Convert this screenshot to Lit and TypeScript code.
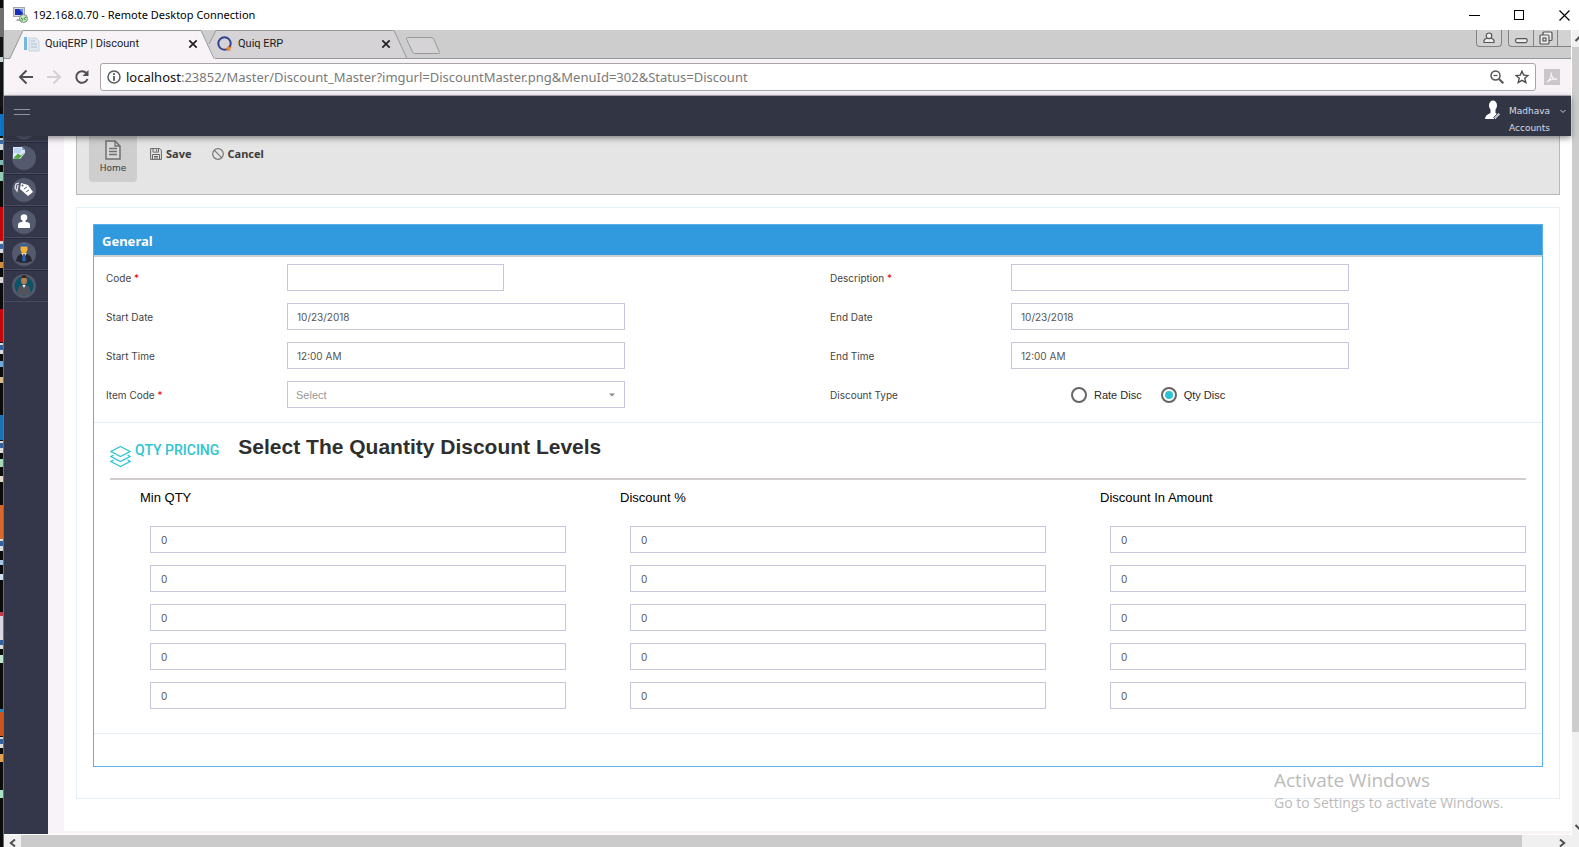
import { LitElement, html, css, svg, nothing } from "lit";
import { customElement, state } from "lit/decorators.js";

type Field = { id: string; label: string; value: string; required?: boolean; short?: boolean };

const LEFT_FIELDS: Field[] = [
  { id: "code", label: "Code", value: "", required: true, short: true },
  { id: "start-date", label: "Start Date", value: "10/23/2018" },
  { id: "start-time", label: "Start Time", value: "12:00 AM" },
];

const RIGHT_FIELDS: Field[] = [
  { id: "description", label: "Description", value: "", required: true },
  { id: "end-date", label: "End Date", value: "10/23/2018" },
  { id: "end-time", label: "End Time", value: "12:00 AM" },
];

const LEVEL_COLUMNS = ["Min QTY", "Discount %", "Discount In Amount"];
const LEVEL_ROWS = [1, 2, 3, 4, 5];

/* ---------- desktop sliver behind the remote window ---------- */
@customElement("desktop-edge")
export class DesktopEdge extends LitElement {
  static styles = css`
    :host {
      display: block;
      border-right: 1px solid #2b83c4;
      background: #0b0b0b;
      overflow: hidden;
    }
    svg { display: block; }
  `;
  private blocks: [number, number, string][] = [
    [8, 29, "#6f6f70"], [37, 70, "#131313"], [57, 5, "#c9d3d8"],
    [114, 22, "#0a7fd8"], [138, 12, "#d5dade"], [140, 4, "#3a6ea5"],
    [160, 5, "#7fb8b0"], [172, 9, "#8fd0b4"],
    [207, 34, "#c40709"], [241, 12, "#dcdcdc"], [244, 5, "#3a65a0"],
    [262, 6, "#cf8d3e"], [277, 6, "#d6d6d6"],
    [309, 33, "#c40709"], [343, 11, "#dcdcdc"], [345, 5, "#33609c"],
    [361, 6, "#6ea8d6"], [377, 6, "#d9b98e"],
    [415, 25, "#1a72b4"], [441, 12, "#dcdcdc"], [443, 5, "#33609c"],
    [459, 8, "#a6d8b8"], [476, 6, "#e2d8c8"],
    [505, 34, "#d8692a"], [539, 12, "#dcdcdc"], [541, 5, "#33609c"],
    [560, 5, "#a4c4e8"], [574, 6, "#cfe0ee"],
    [612, 4, "#c23a4c"], [616, 22, "#dcd6e4"], [638, 11, "#dcdcdc"], [640, 5, "#33609c"],
    [655, 8, "#bfe6cc"],
    [709, 3, "#2a88b8"], [712, 24, "#c9551f"], [737, 11, "#dcdcdc"], [739, 5, "#33609c"],
    [754, 8, "#e0a050"], [790, 8, "#a6e6c4"],
  ];
  render() {
    return html`<svg width="3" height="847" aria-hidden="true">
      ${this.blocks.map(([y, h, c]) => svg`<rect x="0" y=${y} width="3" height=${h} fill=${c}></rect>`)}
    </svg>`;
  }
}

/* ---------- browser chrome: tabs and address bar ---------- */
@customElement("browser-chrome")
export class BrowserChrome extends LitElement {
  static styles = css`
    :host { display: block; font-family: "Noto Sans", sans-serif; color: #1b1b1b; }
    button { border: 0; padding: 0; margin: 0; background: none; font: inherit; color: inherit; display: flex; align-items: center; justify-content: center; }
    svg { display: block; flex: none; }
    .strip { display: flex; height: 28px; background: #cdcdcd; border-bottom: 1px solid #98979a; padding-left: 5px; }
    .tab { position: relative; width: 206px; height: 29px; margin-right: -13px; margin-bottom: -1px; flex: none; }
    .tab.active { z-index: 1; }
    .shape { position: absolute; inset: 0; }
    .tabrow { position: relative; box-sizing: border-box; display: flex; align-items: center; height: 28px; padding: 0 17px 0 15px; gap: 5px; font: 11px/16px Roboto, sans-serif; }
    .tabrow span { flex: 1; white-space: nowrap; }
    .newtab { width: 36px; height: 31px; margin-left: 10px; }
    .controls { margin-left: auto; display: flex; gap: 6px; height: 17px; }
    .group { display: flex; border: 1px solid #828282; border-top: 0; border-radius: 0 0 4px 4px; background: #d2d2d2; }
    .group button { width: 24px; }
    .group button + button { border-left: 1px solid #828282; }
    .group.last { border-right: 0; border-bottom-right-radius: 0; }
    .group.last .cut { width: 14px; }
    .bar { display: flex; align-items: center; height: 36px; background: #f8f3f7; border-bottom: 1px solid #b5b2b8; padding: 0 11px 0 14px; }
    .nav { display: flex; gap: 12px; margin-right: 10px; }
    .nav button { width: 16px; height: 16px; }
    .url { flex: 1; display: flex; align-items: center; height: 26px; border: 1px solid #a7a5a9; border-radius: 3px; background: #fff; padding: 0 6px; gap: 5px; min-width: 0; }
    .address { flex: 1; color: #7a7a7a; font: 13px/20px "Noto Sans", sans-serif; white-space: nowrap; overflow: hidden; }
    .address b { color: #111; font-weight: 400; }
    .tools { display: flex; gap: 11px; }
    .pdf { margin-left: 8px; }
  `;

  private close() {
    return html`<button aria-label="Close tab"><svg width="10" height="10" viewBox="0 0 10 10"><path d="M1.3 1.3l7.4 7.4M8.7 1.3L1.3 8.7" stroke="#1f1f1f" stroke-width="1.7"/></svg></button>`;
  }

  render() {
    return html`
      <div class="strip">
        <div class="tab active">
          <svg class="shape" width="206" height="29"><path d="M0 29L1 28.5L14 .5H192L206 28.5V29Z" fill="#f8f3f7"/><path d="M0 28.5L1 28L14 .5H192L205 28.5" fill="none" stroke="#98979a"/></svg>
          <div class="tabrow">
            <svg width="16" height="16" viewBox="0 0 16 16"><rect x="0" y="1" width="3" height="13" fill="#76b7de"/><path d="M5 2h7l3 3v10H5z" fill="#dfe9f1" stroke="#c7d3dd"/><path d="M7 5h4M7 8h6M7 11h6" stroke="#b0c0cd"/></svg>
            <span>QuiqERP | Discount</span>${this.close()}
          </div>
        </div>
        <div class="tab">
          <svg class="shape" width="206" height="29"><path d="M7 14L14 .5H192L205 28H14Z" fill="#d5d3d6"/><path d="M7 14L14 .5H192L205 28.5" fill="none" stroke="#98979a"/></svg>
          <div class="tabrow">
            <svg width="16" height="16" viewBox="0 0 16 16"><circle cx="7.5" cy="7.5" r="6.2" fill="none" stroke="#2f4494" stroke-width="2"/><path d="M11 9.500l1.200 1.600 2.800.2-2 1.700.8 2-2-.8-1.500 1.500-.3-2.200-2-1 2.200-.7z" fill="#ee8327"/></svg>
            <span>Quiq ERP</span>${this.close()}
          </div>
        </div>
        <button class="newtab" aria-label="New tab"><svg width="36" height="18" viewBox="0 0 36 18"><path d="M2.5 .5H26Q28 .5 29 2.5L34.5 15.5Q34.5 16.5 33.5 16.5H10Q8.5 16.5 7.5 15L1.5 2Q1.3 .7 2.5 .5Z" fill="#d5d3d6" stroke="#9a989b"/></svg></button>
        <div class="controls">
          <div class="group"><button aria-label="Profile"><svg width="12" height="12" viewBox="0 0 12 12" fill="#eee" stroke="#555" stroke-width="1.2"><path d="M1 10.5V8.5Q1.5 6.500 4 6.500H8Q10.5 6.500 11 8.5V10.5Z"/><circle cx="6" cy="3.8" r="2.8"/></svg></button></div>
          <div class="group last">
            <button aria-label="Minimize"><svg width="13" height="12"><rect x=".6" y="6.600" width="11.5" height="4" rx="1.5" fill="#eee" stroke="#555" stroke-width="1.2"/></svg></button>
            <button aria-label="Restore"><svg width="14" height="14" viewBox="0 0 14 14" fill="#eee" stroke="#555" stroke-width="1.2"><rect x="4" y="1" width="9" height="8.5" rx="1"/><rect x="1" y="4" width="9" height="9" rx="1"/><rect x="4" y="7" width="3" height="3"/></svg></button>
            <button class="cut" aria-label="Close"></button>
          </div>
        </div>
      </div>
      <div class="bar">
        <div class="nav">
          <button aria-label="Back"><svg width="16" height="16" viewBox="0 0 16 16" fill="none" stroke="#4e5054" stroke-width="2"><path d="M15 8H2.5M8.5 1.5L2 8l6.5 6.5"/></svg></button>
          <button aria-label="Forward"><svg width="16" height="16" viewBox="0 0 16 16" fill="none" stroke="#d5d1d6" stroke-width="2"><path d="M1 8h12.5M7.5 1.5L14 8l-6.5 6.5"/></svg></button>
          <button aria-label="Reload"><svg width="16" height="16" viewBox="0 0 16 16" fill="none" stroke="#4e5054" stroke-width="2"><path d="M13.5 10A5.8 5.8 0 1 1 12.3 4"/><path d="M14.5 1v6H8.5z" fill="#4e5054" stroke="none"/></svg></button>
        </div>
        <div class="url">
          <svg width="14" height="14" viewBox="0 0 14 14"><circle cx="7" cy="7" r="6" fill="none" stroke="#5c5c5c" stroke-width="1.5"/><path d="M7 3.2v1.7M7 6v4.7" stroke="#4a4a4a" stroke-width="1.7"/></svg>
          <span class="address"><b>localhost</b>:23852/Master/Discount_Master?imgurl=DiscountMaster.png&amp;MenuId=302&amp;Status=Discount</span>
          <div class="tools">
            <button aria-label="Zoom"><svg width="14" height="14" viewBox="0 0 14 14" fill="none" stroke="#555"><circle cx="5.5" cy="5.5" r="4.5" stroke-width="1.5"/><path d="M3.5 5.5h4" stroke-width="1.2"/><path d="M9 9l4.3 4.3" stroke-width="2"/></svg></button>
            <button aria-label="Bookmark"><svg width="14" height="14" viewBox="0 0 14 14"><path d="M7 1.2l1.7 3.9 4.3.4-3.2 2.8 1 4.2L7 10.300l-3.8 2.2 1-4.2L1 5.5l4.3-.4z" fill="none" stroke="#4d4d4d" stroke-width="1.4"/></svg></button>
          </div>
        </div>
        <button class="pdf" aria-label="PDF"><svg width="16" height="16" viewBox="0 0 16 16"><rect width="16" height="16" fill="#c9c7ca"/><path d="M3 13C6 11 8 7 7 3.5c0 4 2.5 7 6 7C9 9.5 5 11 3 13" fill="none" stroke="#f6f3f6" stroke-width="1.3"/></svg></button>
      </div>`;
  }
}

/* ---------- application menu rail ---------- */
@customElement("side-rail")
export class SideRail extends LitElement {
  static styles = css`
    :host { display: block; background: #333749; width: 44px; flex: none; }
    .stub { height: 5px; border-bottom: 1px solid #444857; background: radial-gradient(circle at 20px -8px, #4b5063 11px, #333749 12px); }
    ul { list-style: none; margin: 0; padding: 0; }
    li { border-bottom: 1px solid #464a5c; border-top: 1px solid #272b3b; height: 30px; display: flex; align-items: center; padding-left: 8px; }
    a { display: block; width: 24px; height: 24px; border-radius: 50%; background: #545a6d; }
    svg { display: block; }
  `;
  private icons = [
    { name: "Dashboard", art: svg`<path d="M1 1h9l3 3v9H1z" fill="#dfeafa"/><path d="M2 2h7v5H2z" fill="#b9d4f2"/><path d="M10 1v3h3z" fill="#7f9fc6"/><path d="M1 12.5l5-5 3 2 4-4-6 7.500z" fill="#4fa63c"/><path d="M8 13l5-6v6z" fill="#545a6d"/>` },
    { name: "Pricing", art: svg`<path d="M9 5l7 2 5 7-5 4-8-7z" fill="#fff"/><path d="M7 5l-3 1-1 4 2 3 1-6" fill="none" stroke="#e4e6ea" stroke-width="1.3"/><circle cx="10.5" cy="7.5" r="1" fill="#545a6d"/><path d="M12 11l3-2M14 14l3-2" stroke="#545a6d"/>` },
    { name: "Customers", art: svg`<circle cx="12" cy="7.5" r="3.3" fill="#fff"/><path d="M10.5 9h3v3h-3z" fill="#fff"/><path d="M6 18v-3q0-3 4-3h4q4 0 4 3v3z" fill="#fff"/>` },
    { name: "Managers", art: svg`<path d="M4 19q1-6 5-7h6q4 1 5 7-8 4-16 0z" fill="#26282f"/><ellipse cx="12" cy="6.500" rx="3.5" ry="5" fill="#f3b43a"/><path d="M8.500 3.500q3.500-4 7 0v1h-7z" fill="#2d5ea8"/><path d="M9 11h6l-3 5z" fill="#f4d48c"/><path d="M11 12h2l1 6-2 2-2-2z" fill="#2862b9"/>` },
    { name: "Employees", art: svg`<circle cx="12" cy="12" r="9.5" fill="#0d5366"/><path d="M5 21l1.5-8 4-2h3l4 2 1.5 8z" fill="#54545e"/><path d="M10.5 11h3L12 14z" fill="#fff"/><ellipse cx="12" cy="6" rx="3" ry="4.500" fill="#b67c52"/><path d="M9 5q0-4 3-4t3 4l-1-1h-4z" fill="#3b2620"/>` },
  ];
  render() {
    return html`<nav aria-label="Modules"><div class="stub"></div><ul>
      ${this.icons.map((i) => html`<li><a href="#" aria-label=${i.name}><svg width="24" height="24" viewBox="0 0 24 24">${i.art}</svg></a></li>`)}
    </ul></nav>`;
  }
}

/* ---------- discount form ---------- */
@customElement("discount-form")
export class DiscountForm extends LitElement {
  @state() private kind = "qty";

  static styles = css`
    * { box-sizing: border-box; }
    :host { display: block; font: 10px/16px Inter, Arial, sans-serif; color: #444; }
    svg { display: block; flex: none; }
    .panel { border: 1px solid #5baee8; }
    h2 { margin: 0; height: 32px; padding: 2px 0 0 8px; background: #3199de; border-bottom: 2px solid #d0cdd0; color: #fff; font: 700 13px/28px "Noto Sans", sans-serif; }
    .pair { display: grid; grid-template-columns: 1fr 1fr; border-bottom: 1px solid #e6eef6; padding: 7px 0 14px; }
    .column { display: grid; gap: 12px; align-content: start; }
    .row { display: grid; grid-template-columns: 25% 50%; height: 27px; align-items: center; }
    .row.short { grid-template-columns: 25% 33.333%; }
    .row > * { margin: 0 12px; }
    .row > label, .row > .caption { white-space: nowrap; }
    .star { color: #f00000; }
    input[type="text"], select { height: 27px; min-width: 0; border: 1px solid #c5c8dc; border-radius: 0; background: #fff; padding: 0 9px; font: 10px/16px Inter, Arial, sans-serif; color: #555; outline: none; }
    .pick { display: grid; align-items: center; }
    .pick > * { grid-area: 1 / 1; }
    select { appearance: none; width: 100%; font: 11px/16px "Liberation Sans", Arial, sans-serif; color: #999; padding: 0 8px; }
    .caret { justify-self: end; margin-right: 10px; pointer-events: none; }
    .radios { display: flex; gap: 19px; padding-left: 48px; font: 11px/16px "Liberation Sans", Arial, sans-serif; color: #2b2b2b; white-space: nowrap; }
    .row > .radios { padding-left: 60px; }
    .radios label { display: flex; align-items: center; gap: 7px; }
    input[type="radio"] { appearance: none; margin: 0; width: 16px; height: 16px; border: 2px solid #666; border-radius: 50%; background: #fff; display: grid; place-items: center; }
    input[type="radio"]:checked::before { content: ""; width: 8px; height: 8px; border-radius: 50%; background: #2cc5d8; }
    .levels { border-bottom: 1px solid #e6eef6; padding: 0 16px 24px; margin-bottom: 32px; }
    .heading { display: flex; height: 57px; border-bottom: 2px solid #d3cdcd; }
    .heading svg { margin-top: 22px; }
    .section { margin: 17px 19px 0 4px; color: #2ec4d2; font: 500 14px/20px Roboto, sans-serif; white-space: nowrap; }
    h3 { margin: 12px 0 0; color: #2f2f2f; font: 700 21px/24px "Liberation Sans", Arial, sans-serif; white-space: nowrap; }
  `;

  private field(f: Field) {
    return html`<div class="row ${f.short ? "short" : ""}">
      <label for=${f.id}>${f.label}${f.required ? html` <span class="star">*</span>` : nothing}</label>
      <input id=${f.id} type="text" .value=${f.value} />
    </div>`;
  }

  private radio(value: string, text: string) {
    return html`<label><input type="radio" name="kind" .checked=${this.kind === value} @change=${() => (this.kind = value)} />${text}</label>`;
  }

  render() {
    return html`
      <section class="panel">
        <h2>General</h2>
        <div class="pair">
          <div class="column">
            ${LEFT_FIELDS.map((f) => this.field(f))}
            <div class="row">
              <label for="item">Item Code <span class="star">*</span></label>
              <div class="pick"><select id="item"><option>Select</option></select>
                <svg class="caret" width="6" height="4"><path d="M0 .5h6L3 3.5z" fill="#888"/></svg></div>
            </div>
          </div>
          <div class="column">
            ${RIGHT_FIELDS.map((f) => this.field(f))}
            <div class="row"><span class="caption">Discount Type</span>
              <div class="radios" role="radiogroup" aria-label="Discount Type">${this.radio("rate", "Rate Disc")}${this.radio("qty", "Qty Disc")}</div>
            </div>
          </div>
        </div>
        <div class="levels">
          <div class="heading">
            <svg width="21" height="24" viewBox="0 0 21 24" fill="none" stroke="#2ec4d2" stroke-width="1.3"><path d="M10.5 1.5L20 6.5l-9.5 5L1 6.5z"/><path d="M3.5 10L1 11.5l9.5 5 9.5-5-2.5-1.5"/><path d="M3.5 15L1 16.5l9.5 5 9.5-5-2.5-1.5"/></svg>
            <span class="section">QTY PRICING</span>
            <h3>Select The Quantity Discount Levels</h3>
          </div>
          <level-table></level-table>
        </div>
      </section>`;
  }
}

@customElement("level-table")
export class LevelTable extends LitElement {
  static styles = css`
    * { box-sizing: border-box; }
    :host { display: block; margin-left: -24px; }
    table { border-collapse: collapse; width: 100%; table-layout: fixed; }
    th { text-align: left; font: 400 13px/20px "Liberation Sans", Arial, sans-serif; color: #000; padding: 8px 0 18px 54px; }
    td { padding: 0 0 12px 64px; }
    input { display: block; width: 100%; height: 27px; border: 1px solid #c5c8dc; border-radius: 0; padding: 1px 10px 0; font: 10px/16px Inter, Arial, sans-serif; color: #555; }
    tbody tr:last-child td { padding-bottom: 0; }
  `;
  render() {
    return html`<table>
      <thead><tr>${LEVEL_COLUMNS.map((c) => html`<th scope="col">${c}</th>`)}</tr></thead>
      <tbody>${LEVEL_ROWS.map((r) => html`<tr>${LEVEL_COLUMNS.map((c) => html`<td><input type="text" aria-label="${c} ${r}" .value=${"0"} /></td>`)}</tr>`)}</tbody>
    </table>`;
  }
}

/* ---------- whole window ---------- */
@customElement("app-root")
export class AppRoot extends LitElement {
  static styles = css`
    * { box-sizing: border-box; }
    :host { display: grid; grid-template-columns: 4px minmax(0, 1fr); height: 100vh; overflow: hidden; background: #fff; position: relative; font-family: "Liberation Sans", Arial, sans-serif; }
    svg { display: block; flex: none; }
    button { border: 0; padding: 0; margin: 0; background: none; font: inherit; color: inherit; display: flex; align-items: center; justify-content: center; }
    .window { display: flex; flex-direction: column; min-width: 0; min-height: 0; }
    .title { display: flex; align-items: center; height: 30px; flex: none; padding: 0 9px; gap: 5px; color: #000; font: 11px/16px "Noto Sans", sans-serif; }
    .title .wins { margin-left: auto; display: flex; gap: 34px; }
    .middle { flex: 1; display: flex; min-height: 0; }
    .remote { flex: 1; display: flex; flex-direction: column; min-width: 0; min-height: 0; border-right: 1px solid #fff; }
    .top { display: flex; justify-content: space-between; height: 40px; flex: none; background: #323544; padding: 0 5px 0 10px; position: relative; z-index: 1; box-shadow: 0 2px 6px rgba(40, 40, 50, 0.55); }
    .menu { width: 16px; height: 16px; margin-top: 8px; }
    .user { display: flex; gap: 8px; padding-top: 4px; color: #d5dbe8; font: 9px/17px "DejaVu Sans", Verdana, sans-serif; }
    .who { display: flex; flex-direction: column; padding-top: 3px; width: 43px; }
    .who span { white-space: nowrap; }
    .user .chev { margin-top: 9px; }
    .page { flex: 1; display: flex; min-height: 0; overflow: hidden; border-bottom: 1px solid #fff; }
    .content { flex: 1; min-width: 0; border-left: 16px solid #f8f3f7; border-bottom: 3px solid #f8f3f7; padding: 0 11px 0 12px; }
    .actions { display: flex; height: 59px; background: #e5e5e5; border: 1px solid #b9b9b9; border-top: 0; padding-left: 12px; color: #3c3c3c; font: 700 11px/16px "Noto Sans", sans-serif; }
    .home { flex-direction: column; width: 48px; height: 46px; padding-top: 4px; justify-content: flex-start; background: #cecece; border-radius: 0 0 4px 4px; font: 9px/14px "DejaVu Sans", sans-serif; gap: 1px; }
    .act { gap: 4px; height: 16px; margin-top: 10px; margin-left: 13px; }
    .act + .act { margin-left: 20px; }
    .card { border: 1px solid #e8f0f7; margin-top: 12px; padding: 16px 16px 31px; }
    .v { width: 7px; flex: none; background: #f0f0f0; display: flex; flex-direction: column; overflow: hidden; }
    .v .thumb { flex: 8; background: #cdcdcd; }
    .v .rest { flex: 1; }
    .h { display: flex; height: 12px; flex: none; background: #f0f0f0; overflow: hidden; }
    .h button { width: 17px; height: 12px; flex: none; padding-top: 3px; }
    .h .track { flex: 1; padding-right: 32px; }
    .h .thumb { height: 100%; background: #cbcbcb; }
    .h .end { margin-right: 8px; }
    .v button { width: 7px; height: 17px; flex: none; justify-content: flex-start; }
    .activate { position: absolute; right: 68px; bottom: 33px; width: 237px; color: #bbb; font: 14px/22px "Open Sans", "Noto Sans", sans-serif; white-space: nowrap; pointer-events: none; }
    .activate strong { display: block; font: 400 19px/24px "Open Sans", "Noto Sans", sans-serif; }
  `;

  render() {
    return html`
      <desktop-edge></desktop-edge>
      <div class="window">
        <header class="title">
          <svg width="15" height="16" viewBox="0 0 15 16"><rect x=".5" y=".5" width="11" height="9" fill="#d6d9de" stroke="#9fa6ae"/><rect x="2" y="2" width="8" height="6" fill="#1831b8"/><path d="M6 2h4v4z" fill="#6f91ee"/><path d="M4 12h5v2H3z" fill="#a9adb2"/><circle cx="10.5" cy="11.5" r="4" fill="#c9e6c4" stroke="#7e8a7c"/><path d="M8 11l2 1.5-1.5 1M13 10l-2 1.5 1.5 1.5" stroke="#1d8c2b" fill="none"/></svg>
          <span>192.168.0.70 - Remote Desktop Connection</span>
          <div class="wins">
            <button aria-label="Minimize"><svg width="11" height="11"><path d="M0 5.5h11" stroke="#000"/></svg></button>
            <button aria-label="Maximize"><svg width="11" height="11"><rect x=".5" y=".5" width="9" height="9" fill="none" stroke="#000"/></svg></button>
            <button aria-label="Close"><svg width="11" height="11"><path d="M.5.5l10 10M10.5.5l-10 10" stroke="#000" stroke-width="1.2"/></svg></button>
          </div>
        </header>
        <div class="middle">
          <div class="remote">
            <browser-chrome></browser-chrome>
            <header class="top">
              <button class="menu" aria-label="Menu"><svg width="16" height="7"><path d="M0 .5h16M0 5.5h16" stroke="#8e93a2"/></svg></button>
              <div class="user">
                <svg width="16" height="20" viewBox="0 0 16 20"><ellipse cx="8" cy="5.5" rx="4" ry="5" fill="#fff"/><path d="M5.5 8h5v5l3 2-3 4H0q0-4 5.5-6z" fill="#fff"/><path d="M8.5 17.5l5-5 2 2-5 5z" fill="#b9bcc4" stroke="#323544" stroke-width=".8"/></svg>
                <div class="who"><span>Madhava</span><span>Accounts</span></div>
                <svg class="chev" width="6" height="5"><path d="M.5 1l2.5 2.5L5.5 1" fill="none" stroke="#c8cfdf"/></svg>
              </div>
            </header>
            <div class="page">
              <side-rail></side-rail>
              <main class="content">
                <div class="actions">
                  <button class="home"><svg width="16" height="20" viewBox="0 0 16 20"><path d="M1 1h9l5 5v13H1z" fill="#d8d8d8" stroke="#707070" stroke-width="1.5"/><path d="M10 1v5h5M4 8.5h8M4 11.5h8M4 14.5h8" fill="none" stroke="#707070" stroke-width="1.3"/></svg>Home</button>
                  <button class="act"><svg width="12" height="12" viewBox="0 0 12 12" fill="none" stroke="#666"><path d="M.6.6h9.2l1.6 1.6v9.2H.6z"/><path d="M2.5 11.5v-5h7v5M3 .6v3.5h5.5V.6M6.5 1.5v1.8M4 8.5h4M4 10h4"/></svg>Save</button>
                  <button class="act"><svg width="12" height="12" viewBox="0 0 12 12" fill="none" stroke="#777" stroke-width="1.2"><circle cx="6" cy="6" r="5.3"/><path d="M2.2 2.2l7.6 7.6"/></svg>Cancel</button>
                </div>
                <div class="card"><discount-form></discount-form></div>
              </main>
            </div>
          </div>
          <div class="v">
            <button aria-label="Scroll up"><svg width="11" height="8"><path d="M3.5 6L7 2.5 10.5 6" fill="none" stroke="#505050" stroke-width="2"/></svg></button>
            <div class="thumb"></div>
            <div class="rest"></div>
            <button aria-label="Scroll down"><svg width="11" height="8"><path d="M3.5 2L7 5.5 10.5 2" fill="none" stroke="#505050" stroke-width="2"/></svg></button>
          </div>
        </div>
        <div class="h">
          <button aria-label="Scroll left"><svg width="7" height="8"><path d="M6 .5L1.8 4 6 7.5" fill="none" stroke="#505050" stroke-width="2"/></svg></button>
          <div class="track"><div class="thumb"></div></div>
          <button class="end" aria-label="Scroll right"><svg width="7" height="8"><path d="M1 .5L5.2 4 1 7.5" fill="none" stroke="#505050" stroke-width="2"/></svg></button>
        </div>
      </div>
      <div class="activate"><strong>Activate Windows</strong>Go to Settings to activate Windows.</div>
    `;
  }
}
